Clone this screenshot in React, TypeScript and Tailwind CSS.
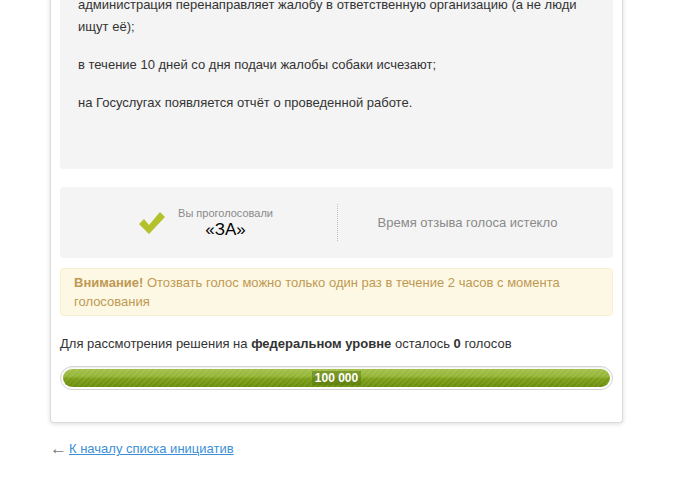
const font = "font-['Liberation_Sans',Arial,sans-serif]";

function CheckIcon() {
  return (
    <svg width="28" height="26" viewBox="0 0 28 26" className="shrink-0">
      <path d="M1 14 L6 9 L11 15 L22 2 L27 7 L11 24 Z" fill="#b3c22a" />
    </svg>
  );
}

function VoteBox() {
  return (
    <div className="flex items-center bg-[#f4f4f4] rounded h-[71px]">
      <div className="flex w-[277px] items-center justify-end pr-[64px] gap-3">
        <CheckIcon />
        <div className="flex flex-col items-center">
          <div className="text-[11px] leading-[14px] text-[#8a8a8a]">Вы проголосовали</div>
          <div className="text-[17px] leading-[20px] text-black">«ЗА»</div>
        </div>
      </div>
      <div className="h-[37px] border-l border-dotted border-[#bdbdbd]" />
      <div className="flex-1 text-center pr-[16px] text-[13px] text-[#8a8a8a]">
        Время отзыва голоса истекло
      </div>
    </div>
  );
}

function ProgressBar() {
  return (
    <div className="rounded-full border border-[#d4d4d4] bg-white p-[2px] shadow-[inset_0_1px_2px_rgba(0,0,0,0.08)]">
      <div className="relative h-[18px] rounded-full overflow-hidden bg-[linear-gradient(to_bottom,#a2bf47_0%,#94b535_40%,#7a9c16_55%,#6a8c0a_100%)]">
        <div className="absolute inset-0 bg-[repeating-linear-gradient(-45deg,rgba(255,255,255,0.08)_0px,rgba(255,255,255,0.08)_2px,transparent_2px,transparent_4px)]" />
        <div className="absolute inset-0 flex items-center justify-center">
          <span className="bg-[rgba(80,110,10,0.45)] px-[3px] text-[12px] leading-[14px] font-bold text-white">
            100 000
          </span>
        </div>
      </div>
    </div>
  );
}

export default function App() {
  return (
    <div className={`${font} bg-white min-h-[480px] text-[13px] text-[#333]`}>
      <div className="ml-[50px] w-[573px] bg-white border border-t-0 border-[#dcdcdc] rounded-b shadow-[0_1px_4px_rgba(0,0,0,0.15)] px-[9px] pb-[32px]">
        <div className="bg-[#f4f4f4] rounded-b pl-[18px] pr-[18px] pb-[55px] leading-[22px]">
          <p className="-mt-[6px] pt-0">
            администрация перенаправляет жалобу в ответственную организацию (а не люди ищут её);
          </p>
          <p className="mt-[16px]">в течение 10 дней со дня подачи жалобы собаки исчезают;</p>
          <p className="mt-[16px]">на Госуслугах появляется отчёт о проведенной работе.</p>
        </div>

        <div className="mt-[18px]">
          <VoteBox />
        </div>

        <div className="mt-[10px] bg-[#fcf8e3] border border-[#f8efcf] rounded px-[13px] py-[4px] leading-[19px] text-[#c09853]">
          <b>Внимание!</b> Отозвать голос можно только один раз в течение 2 часов с момента голосования
        </div>

        <div className="mt-[19px] leading-[18px]">
          Для рассмотрения решения на <b>федеральном уровне</b> осталось <b>0</b> голосов
        </div>

        <div className="mt-[13px]">
          <ProgressBar />
        </div>
      </div>

      <div className="ml-[50px] mt-[17px] flex items-center gap-[2px] h-[18px]">
        <span className="text-[#777] text-[17px] leading-[16px]">←</span>
        <a href="#" className="text-[#3d8fd8] underline">
          К началу списка инициатив
        </a>
      </div>
    </div>
  );
}
